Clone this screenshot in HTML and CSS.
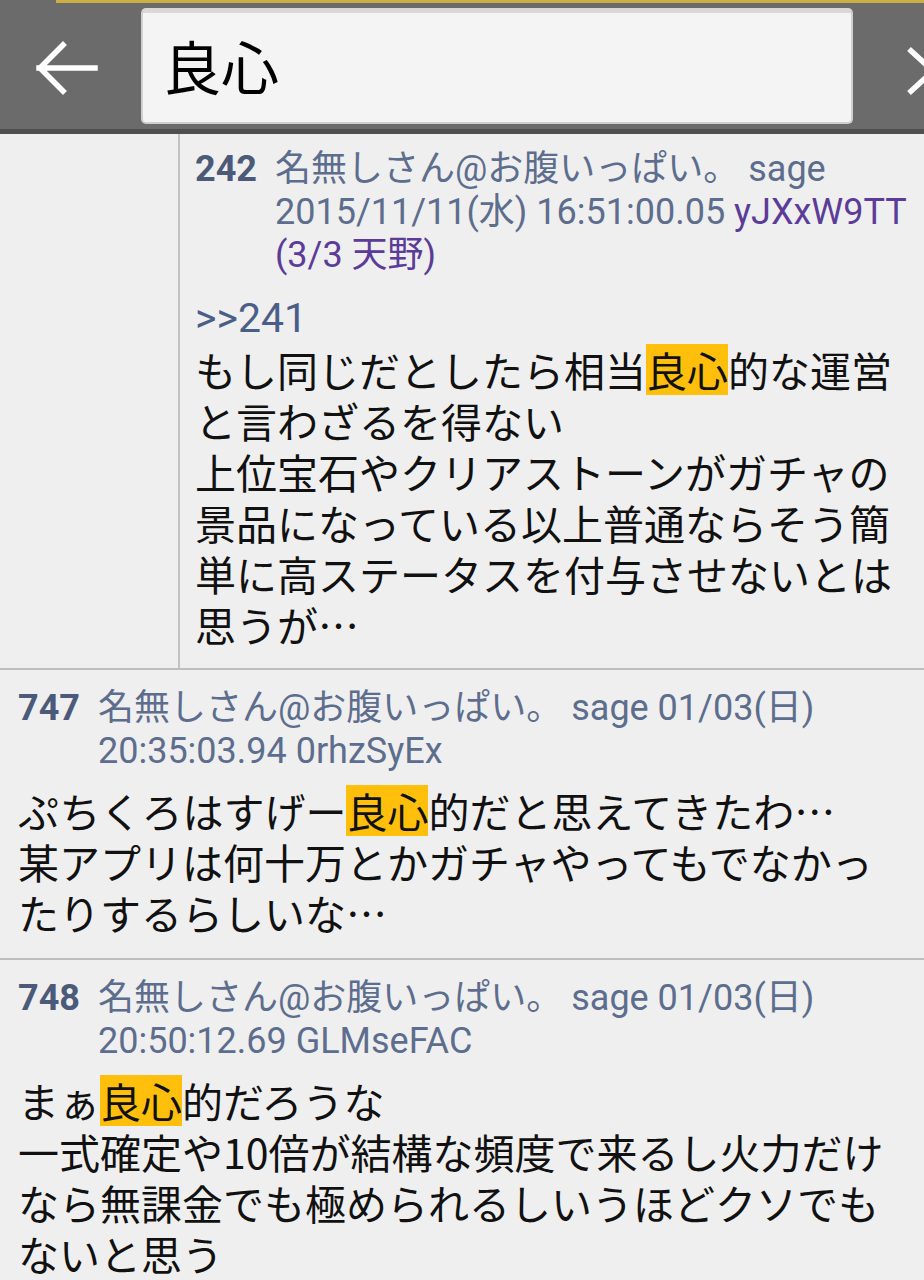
FILE: index.html
```html
<!DOCTYPE html>
<html lang="ja">
  <head>
    <meta charset="UTF-8" />
    <meta name="viewport" content="width=device-width, initial-scale=1.0" />
    <title>検索: 良心</title>
    <link rel="stylesheet" href="styles.css">
  </head>
  <body>
    <div class="search-bar">
      <div class="progress"></div>
      <div class="bar-row">
        <div class="back-btn">
          <svg width="70" height="60" viewBox="0 0 70 60">
            <path d="M10 30 H66 M34 7 L11 30 L34 53" fill="none" stroke="#fff" stroke-width="5.5" stroke-linecap="square" />
          </svg>
        </div>
        <div class="search-box">良心</div>
        <div class="next-btn">
          <svg width="40" height="60" viewBox="0 0 40 60">
            <path d="M6 8 L30 30 L6 52" fill="none" stroke="#fff" stroke-width="5.5" />
          </svg>
        </div>
      </div>
    </div>

    <div class="thread">
      <div class="res nested">
        <div class="res-inner">
          <div class="res-head">
            <span class="res-num">242</span>
            <div class="res-meta">
              名無しさん@お腹いっぱい。 sage<br>
              2015/11/11(水) 16:51:00.05 <span class="res-id">yJXxW9TT</span><br>
              <span class="res-id">(3/3 天野)</span>
            </div>
          </div>
          <div class="res-body">
            <span class="anchor">&gt;&gt;241</span><br>
            もし同じだとしたら相当<span class="hit">良心</span>的な運営と言わざるを得ない<br>
            上位宝石やクリアストーンがガチャの景品になっている以上普通ならそう簡単に高ステータスを付与させないとは思うが…
          </div>
        </div>
      </div>

      <div class="res">
        <div class="res-head">
          <span class="res-num">747</span>
          <div class="res-meta">
            名無しさん@お腹いっぱい。 sage 01/03(日)<br>
            20:35:03.94 0rhzSyEx
          </div>
        </div>
        <div class="res-body">
          ぷちくろはすげー<span class="hit">良心</span>的だと思えてきたわ…<br>
          某アプリは何十万とかガチャやってもでなかったりするらしいな…
        </div>
      </div>

      <div class="res">
        <div class="res-head">
          <span class="res-num">748</span>
          <div class="res-meta">
            名無しさん@お腹いっぱい。 sage 01/03(日)<br>
            20:50:12.69 GLMseFAC
          </div>
        </div>
        <div class="res-body">
          まぁ<span class="hit">良心</span>的だろうな<br>
          一式確定や10倍が結構な頻度で来るし火力だけなら無課金でも極められるしいうほどクソでもないと思う
        </div>
      </div>
    </div>
  </body>
</html>
```

FILE: styles.css
```css
body {
  margin: 0;
  background-color: #efefef;
  font-family: Roboto, "Noto Sans CJK JP", sans-serif;
}
.search-bar {
  background-color: #6b6b6b;
  border-bottom: 5px solid #4f4f4f;
}
.progress {
  height: 3px;
  margin-left: 56px;
  background-color: #c9b046;
}
.bar-row {
  display: flex;
  align-items: flex-start;
  height: 126px;
}
.back-btn {
  width: 141px;
  display: flex;
  justify-content: flex-start;
  padding: 35px 0 0 29px;
  box-sizing: border-box;
}
.search-box {
  margin-top: 5px;
  width: 712px;
  height: 116px;
  box-sizing: border-box;
  background-color: #f4f4f4;
  border: 2px solid #cfcfcf;
  border-top: 5px solid #d8d8d8;
  border-radius: 5px;
  padding-left: 20px;
  font-family: "Noto Sans CJK JP", sans-serif;
  font-size: 58px;
  line-height: 104px;
  color: #000;
}
.next-btn {
  flex: 1;
  overflow: hidden;
  padding: 38px 0 0 50px;
}
.thread {
  overflow: hidden;
}
.res {
  padding: 17px 18px 20px 18px;
  border-bottom: 2px solid #bdbdbd;
}
.res.nested {
  padding: 0 18px 0 178px;
}
.res-inner {
  border-left: 2px solid #c2c2c2;
  padding: 14px 0 18px 15px;
}
.res-head {
  display: flex;
  gap: 18px;
  font-size: 36px;
  line-height: 43px;
  color: #5d6d8d;
  white-space: nowrap;
}
.res-num {
  font-weight: bold;
  color: #4b5a78;
}
.res-id {
  color: #5b3c98;
}
.res-body {
  margin-top: 12px;
  font-family: "Noto Sans CJK JP", sans-serif;
  font-size: 41px;
  line-height: 51px;
  color: #111;
}
.anchor {
  font-family: Roboto, sans-serif;
  color: #4b5e88;
}
.hit {
  display: inline-block;
  vertical-align: top;
  background-color: #ffbf0a;
}
```
